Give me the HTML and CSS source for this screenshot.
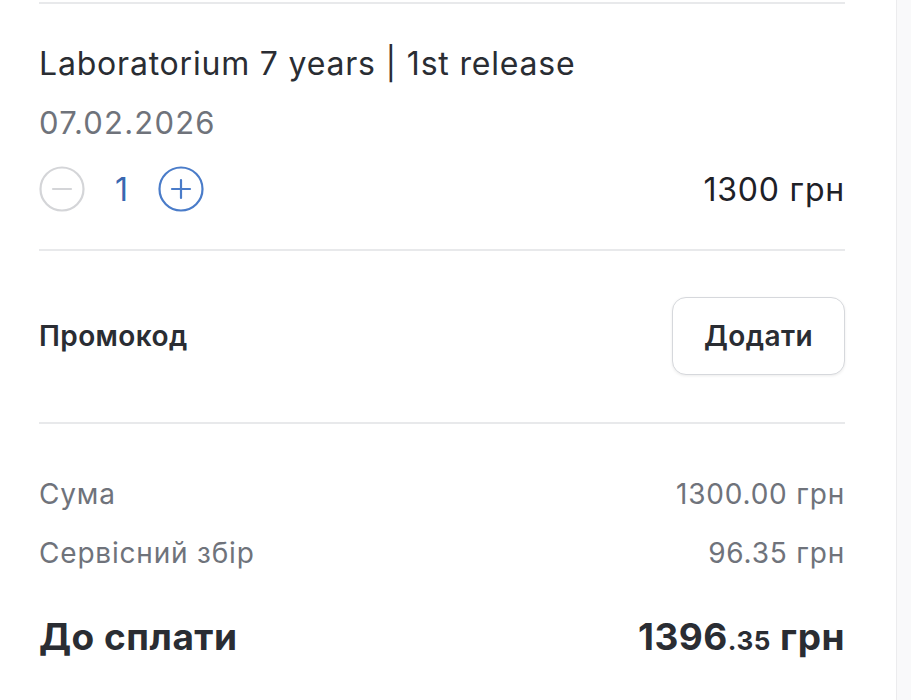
FILE: index.html
```html
<!DOCTYPE html>
<html lang="uk">
<head>
<meta charset="utf-8">
<link rel="stylesheet" href="styles.css">
</head>
<body>
<div class="page">
  <main class="cart">
    <div class="divider top"></div>
    <section class="item">
      <h2 class="item-title">Laboratorium 7 years | 1st release</h2>
      <div class="item-date">07.02.2026</div>
      <div class="item-row">
        <div class="counter">
          <button class="round minus" aria-label="Менше">
            <svg viewBox="0 0 46 46" width="46" height="46"><circle cx="23" cy="23" r="21.5" fill="none" stroke="#d4d5d8" stroke-width="2.2"/><path d="M14 23H32" stroke="#d4d5d8" stroke-width="2.2" stroke-linecap="round"/></svg>
          </button>
          <span class="qty">1</span>
          <button class="round plus" aria-label="Більше">
            <svg viewBox="0 0 46 46" width="46" height="46"><circle cx="23" cy="23" r="21.5" fill="none" stroke="#4a7cc9" stroke-width="2.2"/><path d="M14 23H32M23 14V32" stroke="#4a7cc9" stroke-width="2.2" stroke-linecap="round"/></svg>
          </button>
        </div>
        <div class="item-price">1300 грн</div>
      </div>
    </section>
    <div class="divider"></div>
    <section class="promo">
      <span class="promo-label">Промокод</span>
      <button class="promo-btn">Додати</button>
    </section>
    <div class="divider"></div>
    <section class="summary">
      <div class="sum-row"><span>Сума</span><span>1300.00 грн</span></div>
      <div class="sum-row"><span>Сервісний збір</span><span>96.35 грн</span></div>
      <div class="total-row"><span>До сплати</span><span>1396<small>.35</small> грн</span></div>
    </section>
  </main>
  <aside class="side"></aside>
</div>
</body>
</html>
```
FILE: styles.css
```css
html, body {
  margin: 0;
  padding: 0;
  background: #ffffff;
}
body {
  font-family: Inter, "Noto Sans", "Liberation Sans", sans-serif;
  color: #23262d;
}
.page {
  display: flex;
  width: 911px;
  height: 700px;
  overflow: hidden;
}
.cart {
  width: 806px;
  padding: 2px 51px 0 39px;
  border-right: 1px solid #ececee;
  flex: none;
}
.side {
  flex: 1;
  background: #f9f9fa;
}
.divider {
  height: 2px;
  background: #e8e9eb;
}
.item {
  padding-top: 41px;
  padding-bottom: 37px;
}
.item-title {
  margin: 0;
  font-size: 32px;
  font-weight: 400;
  line-height: 38px;
  color: #2a2d33;
  letter-spacing: 0.8px;
}
.item-date {
  margin-top: 22px;
  font-size: 31px;
  line-height: 36px;
  letter-spacing: 1.2px;
  color: #6f737b;
}
.item-row {
  margin-top: 25px;
  display: flex;
  align-items: center;
  justify-content: space-between;
}
.counter {
  display: flex;
  align-items: center;
}
.round {
  width: 46px;
  height: 46px;
  padding: 0;
  border: 0;
  background: none;
  display: block;
}
.round svg { display: block; }
.qty {
  width: 73px;
  text-align: center;
  font-size: 32px;
  color: #3a67b0;
}
.item-price {
  font-size: 32px;
  letter-spacing: 0.8px;
  color: #1e2127;
}
.promo {
  display: flex;
  justify-content: space-between;
  align-items: center;
  padding: 46px 0 47px;
}
.promo-label {
  font-size: 28px;
  font-weight: 600;
  letter-spacing: 0.4px;
  color: #2a2d33;
}
.promo-btn {
  width: 173px;
  height: 78px;
  border: 1.5px solid #d6d8dc;
  border-radius: 14px;
  background: #fff;
  box-shadow: 0 1px 3px rgba(0,0,0,0.08);
  font-family: inherit;
  font-size: 28px;
  font-weight: 600;
  letter-spacing: 0.4px;
  color: #2a2d33;
}
.summary {
  padding-top: 53px;
}
.sum-row {
  display: flex;
  justify-content: space-between;
  font-size: 28px;
  line-height: 34px;
  letter-spacing: 0.8px;
  color: #6f737b;
  margin-bottom: 25px;
}
.total-row {
  display: flex;
  justify-content: space-between;
  align-items: baseline;
  margin-top: 46px;
  font-size: 37px;
  font-weight: 700;
  line-height: 42px;
  letter-spacing: 0.5px;
  color: #2a2d33;
}
.total-row small {
  font-size: 26px;
  font-weight: 700;
}
```
